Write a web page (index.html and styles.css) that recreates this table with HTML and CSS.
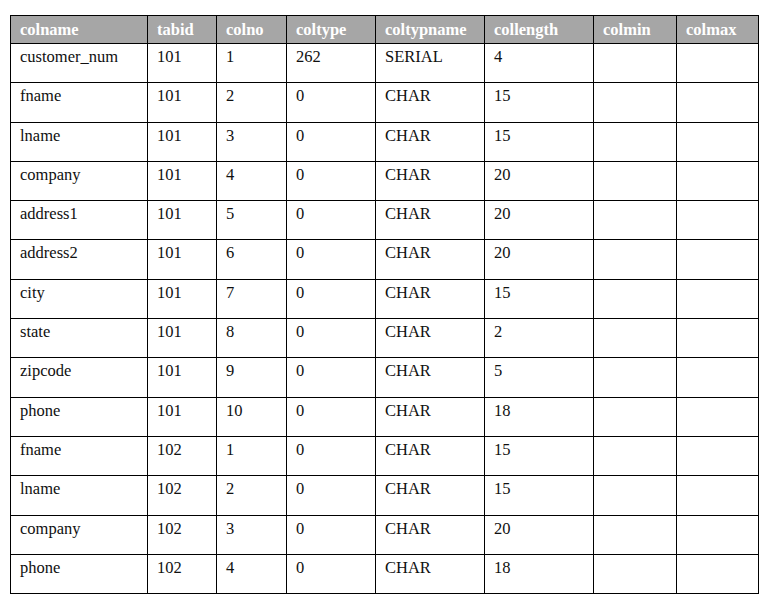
FILE: index.html
```html
<!DOCTYPE html>
<html>
<head>
<meta charset="utf-8">
<link rel="stylesheet" href="styles.css">
</head>
<body>
<table class="syscols">
  <colgroup>
    <col class="c-name"><col class="c-tabid"><col class="c-colno"><col class="c-type"><col class="c-typename"><col class="c-len"><col class="c-min"><col class="c-max">
  </colgroup>
  <thead>
    <tr><th>colname</th><th>tabid</th><th>colno</th><th>coltype</th><th>coltypname</th><th>collength</th><th>colmin</th><th>colmax</th></tr>
  </thead>
  <tbody>
    <tr><td>customer_num</td><td>101</td><td>1</td><td>262</td><td>SERIAL</td><td>4</td><td></td><td></td></tr>
    <tr><td>fname</td><td>101</td><td>2</td><td>0</td><td>CHAR</td><td>15</td><td></td><td></td></tr>
    <tr><td>lname</td><td>101</td><td>3</td><td>0</td><td>CHAR</td><td>15</td><td></td><td></td></tr>
    <tr><td>company</td><td>101</td><td>4</td><td>0</td><td>CHAR</td><td>20</td><td></td><td></td></tr>
    <tr><td>address1</td><td>101</td><td>5</td><td>0</td><td>CHAR</td><td>20</td><td></td><td></td></tr>
    <tr><td>address2</td><td>101</td><td>6</td><td>0</td><td>CHAR</td><td>20</td><td></td><td></td></tr>
    <tr><td>city</td><td>101</td><td>7</td><td>0</td><td>CHAR</td><td>15</td><td></td><td></td></tr>
    <tr><td>state</td><td>101</td><td>8</td><td>0</td><td>CHAR</td><td>2</td><td></td><td></td></tr>
    <tr><td>zipcode</td><td>101</td><td>9</td><td>0</td><td>CHAR</td><td>5</td><td></td><td></td></tr>
    <tr><td>phone</td><td>101</td><td>10</td><td>0</td><td>CHAR</td><td>18</td><td></td><td></td></tr>
    <tr><td>fname</td><td>102</td><td>1</td><td>0</td><td>CHAR</td><td>15</td><td></td><td></td></tr>
    <tr><td>lname</td><td>102</td><td>2</td><td>0</td><td>CHAR</td><td>15</td><td></td><td></td></tr>
    <tr><td>company</td><td>102</td><td>3</td><td>0</td><td>CHAR</td><td>20</td><td></td><td></td></tr>
    <tr><td>phone</td><td>102</td><td>4</td><td>0</td><td>CHAR</td><td>18</td><td></td><td></td></tr>
  </tbody>
</table>
</body>
</html>
```

FILE: styles.css
```css
html, body {
  margin: 0;
  padding: 0;
  background: #ffffff;
}

body {
  padding: 15px 0 0 10px;
  font-family: "Liberation Serif", "Noto Sans CJK SC", serif;
  font-size: 16.5px;
  color: #101010;
}

.syscols {
  border-collapse: collapse;
  table-layout: fixed;
  width: 748px;
}

.c-name { width: 137px; }
.c-tabid { width: 69px; }
.c-colno { width: 70px; }
.c-type { width: 89px; }
.c-typename { width: 109px; }
.c-len { width: 109px; }
.c-min { width: 83px; }
.c-max { width: 82px; }

.syscols th,
.syscols td {
  border: 1px solid #000;
  padding: 0 0 0 9px;
  text-align: left;
  white-space: nowrap;
  line-height: 18px;
}

.syscols th {
  background: #a6a6a6;
  color: #ffffff;
  font-weight: bold;
  height: 28px;
  box-sizing: border-box;
  vertical-align: middle;
}

.syscols td {
  height: 39.3px;
  box-sizing: border-box;
  vertical-align: top;
  padding-top: 4px;
}
```
